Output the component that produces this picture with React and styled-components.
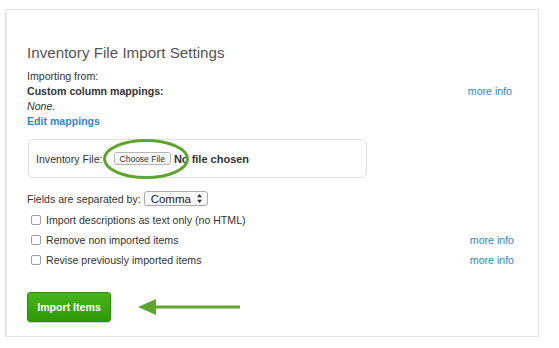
import React from "react";
import styled, { createGlobalStyle } from "styled-components";

const Global = createGlobalStyle`
  body {
    margin: 0;
    background: #ffffff;
    font-family: "Liberation Sans", Arial, sans-serif;
    color: #333;
  }
`;

const Card = styled.div`
  box-sizing: border-box;
  width: 533px;
  height: 328px;
  margin: 9px 0 0 6px;
  padding: 34px 24px 0 20px;

  border: 1px solid #e4e4e4;
  box-shadow: -1px 1px 2px rgba(0, 0, 0, 0.12);
  background: #fff;
`;

const Title = styled.h2`
  margin: 0 0 7px;
  font-size: 15.2px;
  line-height: 18px;
  font-weight: normal;
  color: #555;
`;

const Line = styled.div`
  display: flex;
  justify-content: space-between;
  align-items: center;
  font-size: 10.6px;
  line-height: 15px;
  font-weight: ${p => (p.bold ? 700 : 400)};
  font-style: ${p => (p.italic ? "italic" : "normal")};
  color: ${p => (p.link ? "#2d87c4" : "#333")};
`;

const MoreInfo = styled.a`
  font-size: 10.6px;
  font-weight: 400;
  font-style: normal;
  color: #2d87c4;
  text-decoration: none;
  margin-right: ${p => p.shift || 0}px;
`;

const FileBox = styled.div`
  position: relative;
  box-sizing: border-box;
  width: 339px;
  height: 39px;
  margin: 10px 0 0 1px;
  padding: 0 7px;

  display: flex;
  align-items: center;
  gap: 3px;

  border: 1px solid #e0e0e0;
  border-radius: 5px;
  font-size: 10.6px;
`;

const FileButton = styled.span`
  display: inline-flex;
  align-items: center;
  margin-left: 8px;
  height: 11px;
  padding: 0 5px;
  border: 1px solid #b5b5b5;
  border-radius: 3px;
  background: linear-gradient(#ffffff, #f0f0f0);
  font-size: 8.5px;
  color: #333;
`;

const NoFile = styled.span`
  font-size: 11px;
  font-weight: 700;
  color: #333;
`;

const Ring = styled.svg`
  position: absolute;
  left: 73px;
  top: -2px;
  pointer-events: none;
`;

const SepRow = styled.div`
  display: flex;
  align-items: center;
  gap: 3px;
  margin-top: 13px;
  font-size: 10.6px;
  color: #333;
`;

const Select = styled.span`
  display: inline-flex;
  align-items: center;
  gap: 5px;
  height: 13px;
  padding: 0 4px 0 6px;
  border: 1px solid #aaa;
  border-radius: 3px;
  background: linear-gradient(#fff, #f3f3f3);
  font-size: 11.5px;
  color: #222;
`;

const Options = styled.div`
  margin-top: 4px;
  display: flex;
  flex-direction: column;
`;

const OptionRow = styled.div`
  display: flex;
  align-items: center;
  justify-content: space-between;
  height: 20px;
  font-size: 10.6px;
  color: #333;
`;

const CheckLabel = styled.label`
  display: flex;
  align-items: center;
  gap: 5px;
  padding-left: 4px;
`;

const Box = styled.span`
  box-sizing: border-box;
  width: 10px;
  height: 10px;
  border: 1px solid #a0a0a0;
  border-radius: 2px;
  background: #fff;
`;

const Footer = styled.div`
  display: flex;
  align-items: center;
  gap: 27px;
  margin-top: 22px;
`;

const ImportButton = styled.button`
  width: 84px;
  height: 30px;
  border: 1px solid #2f8f0a;
  border-radius: 3px;
  background: linear-gradient(#47b51a, #2e9a07);
  color: #fff;
  font-family: "Liberation Sans", Arial, sans-serif;
  font-size: 10.6px;
  font-weight: 700;
  box-shadow: 0 1px 1px rgba(0, 0, 0, 0.2);
`;

const Arrows = () => (
  <svg width="7" height="11" viewBox="0 0 7 11">
    <path d="M3.5 1 L6 4.2 H1 Z M3.5 10 L6 6.8 H1 Z" fill="#333" />
  </svg>
);

const options = [
  { label: "Import descriptions as text only (no HTML)" },
  { label: "Remove non imported items", info: true },
  { label: "Revise previously imported items", info: true },
];

export default function App() {
  return (
    <>
      <Global />
      <Card>
        <Title>Inventory File Import Settings</Title>
        <Line>Importing from:</Line>
        <Line bold>
          Custom column mappings:
          <MoreInfo href="#" shift={2}>more info</MoreInfo>
        </Line>
        <Line italic>None.</Line>
        <Line bold link>Edit mappings</Line>

        <FileBox>
          Inventory File:
          <FileButton>Choose File</FileButton>
          <NoFile>No file chosen</NoFile>
          <Ring width="88" height="42" viewBox="0 0 88 42">
            <ellipse cx="44" cy="21" rx="41.5" ry="18.5" fill="none" stroke="#5ea52e" strokeWidth="3" />
          </Ring>
        </FileBox>

        <SepRow>
          Fields are separated by:
          <Select>
            Comma
            <Arrows />
          </Select>
        </SepRow>

        <Options>
          {options.map(o => (
            <OptionRow key={o.label}>
              <CheckLabel>
                <Box />
                {o.label}
              </CheckLabel>
              {o.info ? <MoreInfo href="#">more info</MoreInfo> : null}
            </OptionRow>
          ))}
        </Options>

        <Footer>
          <ImportButton>Import Items</ImportButton>
          <svg width="102" height="18" viewBox="0 0 102 18">
            <path d="M0 9 L18 1 L18 17 Z" fill="#5ea52e" />
            <rect x="16" y="7.5" width="86" height="3" fill="#5ea52e" />
          </svg>
        </Footer>
      </Card>
    </>
  );
}
